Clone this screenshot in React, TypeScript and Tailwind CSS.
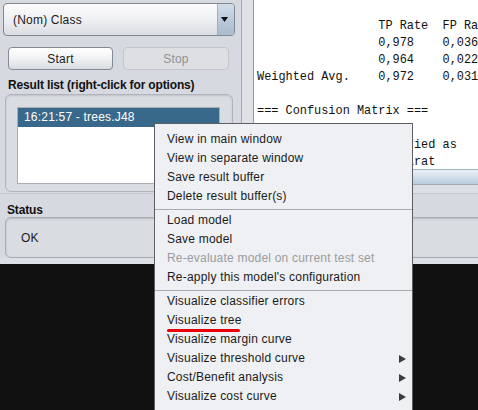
import React from "react";

const Arrow = () => (
  <svg width="7" height="8" viewBox="0 0 7 8" className="block">
    <path d="M0 0 L7 4 L0 8 Z" fill="#3c3c3c" />
  </svg>
);

type Item = { label: string; disabled?: boolean; sub?: boolean; mark?: boolean } | "sep";

const items: Item[] = [
  { label: "View in main window" },
  { label: "View in separate window" },
  { label: "Save result buffer" },
  { label: "Delete result buffer(s)" },
  "sep",
  { label: "Load model" },
  { label: "Save model" },
  { label: "Re-evaluate model on current test set", disabled: true },
  { label: "Re-apply this model's configuration" },
  "sep",
  { label: "Visualize classifier errors" },
  { label: "Visualize tree", mark: true },
  { label: "Visualize margin curve" },
  { label: "Visualize threshold curve", sub: true },
  { label: "Cost/Benefit analysis", sub: true },
  { label: "Visualize cost curve", sub: true },
];

const outLines = [
  "",
  "                 TP Rate  FP Rate  Precision",
  "                 0,978    0,036    0,969",
  "                 0,964    0,022    0,975",
  "Weighted Avg.    0,972    0,031    0,972",
  "",
  "=== Confusion Matrix ===",
  "",
  "   a   b   <-- classified as",
  "   96   3 |   a = Separat",
];

export default function App() {
  return (
    <div className="relative w-[478px] h-[410px] overflow-hidden bg-[#111111] font-['Liberation_Sans',Arial,sans-serif] text-[12px] tracking-[0.2px] text-[#1b1b1b]">
      <div className="h-[264px] bg-[#d6d9df] flex flex-col">
        <div className="h-[193px] flex">
          {/* left column */}
          <div className="w-[241px] shrink-0 flex flex-col pl-[3px]">
            {/* combo */}
            <div className="mt-[3px] w-[232px] h-[33px] flex rounded-[4px] border border-[#7f8791] bg-gradient-to-b from-[#fcfcfd] via-[#eff0f3] to-[#d9dce1] overflow-hidden">
              <div className="flex-1 flex items-center pl-[9px]">(Nom) Class</div>
              <div className="w-[17px] flex items-center justify-center border-l border-[#9fb0c2] bg-gradient-to-b from-[#d3dde8] via-[#bccbdb] to-[#a9bbcd]">
                <svg width="7" height="5" viewBox="0 0 7 5" className="ml-[-3px]">
                  <path d="M0 0 L7 0 L3.5 5 Z" fill="#111" />
                </svg>
              </div>
            </div>
            {/* buttons */}
            <div className="mt-[11px] flex pl-[5px]">
              <div className="w-[105px] h-[23px] flex items-center justify-center rounded-[4px] border border-[#838a93] bg-gradient-to-b from-[#ffffff] via-[#f1f2f4] to-[#d9dce0]">
                Start
              </div>
              <div className="ml-[10px] w-[106px] h-[23px] flex items-center justify-center rounded-[4px] border border-[#c3c6cb] bg-[#dddfe3] text-[#8e9196]">
                Stop
              </div>
            </div>
            {/* label */}
            <div className="mt-[6px] h-[18px] leading-[18px] pl-[5px] font-bold tracking-[-0.15px] text-[#111]">
              Result list (right-click for options)
            </div>
            {/* result box */}
            <div className="ml-[2px] w-[228px] h-[98px] rounded-[6px] border border-[#b1b5bb] bg-[#d9dce1] shadow-[inset_0_1px_2px_rgba(0,0,0,0.12)] pl-[11px] pt-[12px]">
              <div className="w-[203px] h-[77px] bg-white border border-[#a9aeb5]">
                <div className="h-[19px] leading-[19px] bg-[#39698a] text-white pl-[6px]">
                  16:21:57 - trees.J48
                </div>
              </div>
            </div>
          </div>
          {/* divider */}
          <div className="w-[13px] shrink-0 border-l border-r border-l-[#a4a8ae] border-r-[#959aa1] bg-[#dfe1e5]" />
          {/* output */}
          <div className="w-[400px] shrink-0 flex flex-col">
            <div className="h-[169px] bg-white pl-[3px] pt-[1px] overflow-hidden font-['Courier_New','Liberation_Mono',monospace] text-[11.9px] leading-[17px] tracking-normal text-[#111] whitespace-pre">
              {outLines.map((l, i) => (
                <div key={i} className="h-[17px]">
                  {l}
                </div>
              ))}
            </div>
            <div className="h-[15px] border-t border-[#9fb2c5] bg-gradient-to-b from-[#e9f0f7] via-[#d3e0ec] to-[#b9cbdc]" />
            <div className="h-[9px] border-t border-[#a2a6ad] bg-[#dcdfe3]" />
          </div>
        </div>
        {/* status */}
        <div className="h-[24px] pt-[8px] leading-[16px] pl-[7px] font-bold tracking-[-0.15px] text-[#111] border-t border-[#c4c7cc]">
          Status
        </div>
        <div className="ml-[5px] w-[500px] h-[41px] rounded-[6px] border border-[#a7abb2] bg-[#d9dce1] shadow-[inset_0_1px_2px_rgba(0,0,0,0.15)] flex items-center pl-[15px]">
          OK
        </div>
        <div className="flex-1 bg-[#dcdfe3]" />
      </div>

      {/* popup menu */}
      <div className="absolute left-[154px] top-[123px] w-[259px] h-[300px] border border-[#5d5f63] bg-[#eef0f3] pt-[6px]">
        {items.map((it, i) =>
          it === "sep" ? (
            <div key={i} className="h-[5px] pt-[3px]">
              <div className="h-[1px] bg-[#a6a9ae]" />
            </div>
          ) : (
            <div
              key={i}
              className={
                "relative h-[19px] leading-[19px] pl-[12px] pr-[6px] flex items-center justify-between " +
                (it.disabled ? "text-[#9a9ca0]" : "text-[#1b1b1b]")
              }
            >
              <span>{it.label}</span>
              {it.sub ? <Arrow /> : null}
              {it.mark ? (
                <span className="absolute left-[12px] top-[18px] w-[73px] h-[3px] rounded-full bg-[#e8000b]" />
              ) : null}
            </div>
          )
        )}
      </div>
    </div>
  );
}
